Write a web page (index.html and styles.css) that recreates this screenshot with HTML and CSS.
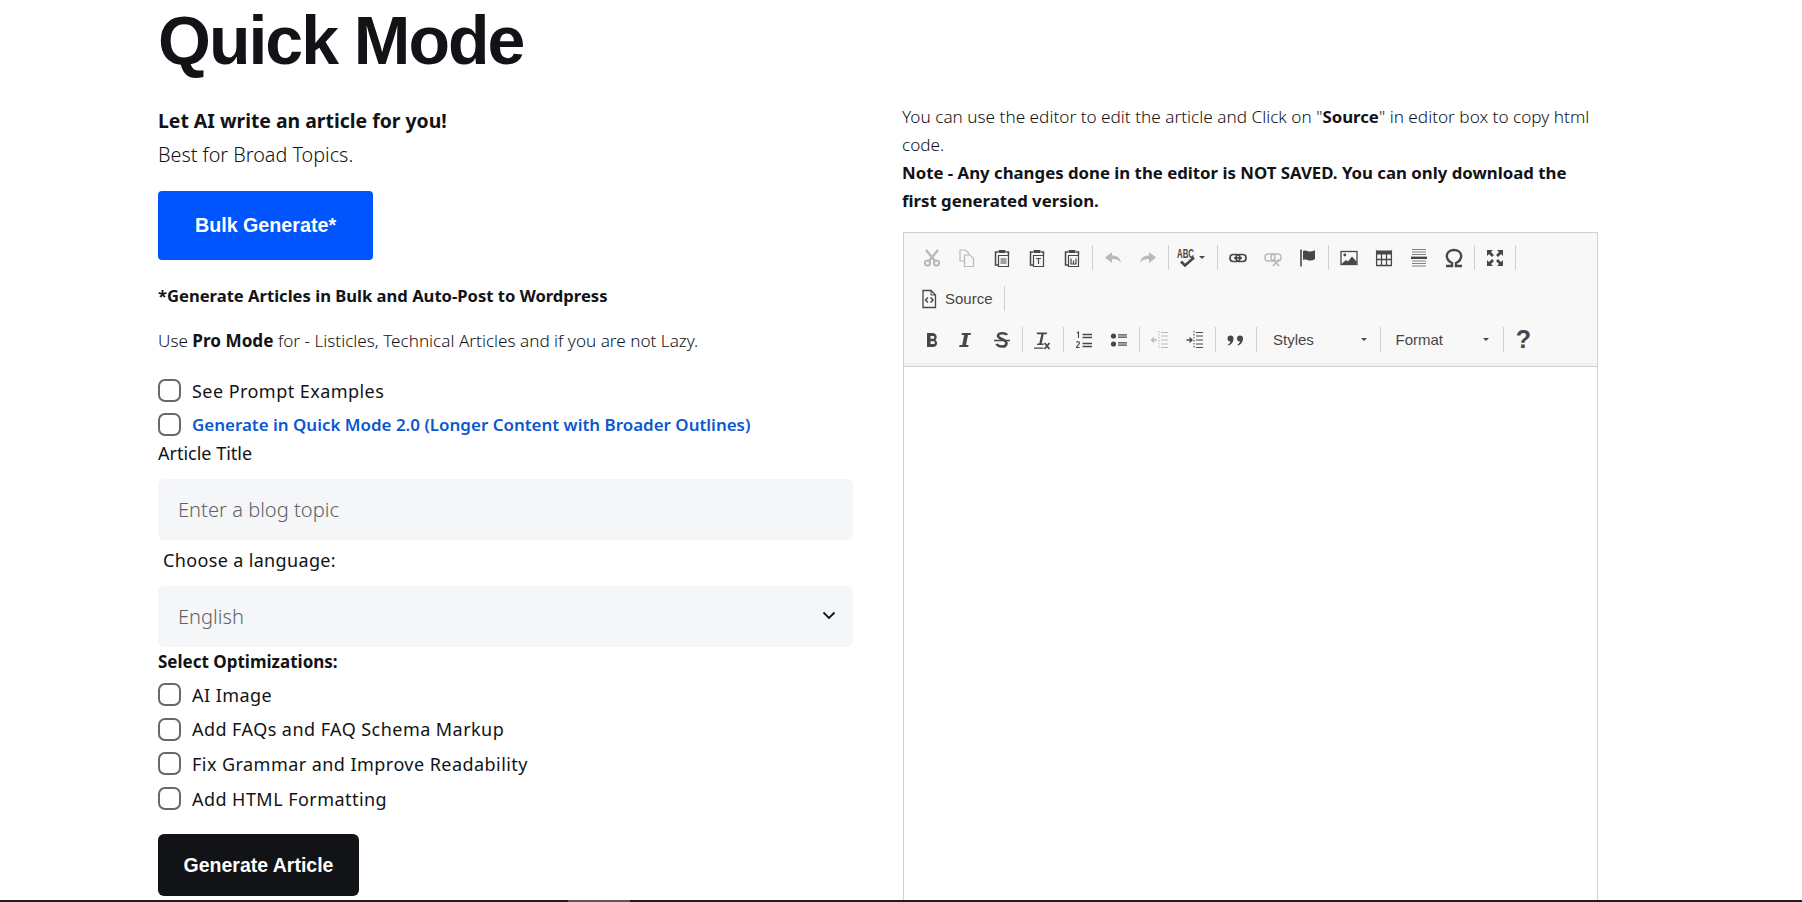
FILE: index.html
```html
<!DOCTYPE html>
<html lang="en">
<head>
<meta charset="utf-8">
<title>Quick Mode</title>
<link rel="stylesheet" href="styles.css">
</head>
<body>
<main class="page">
  <section class="left">
    <h1 class="title">Quick Mode</h1>
    <p class="lead"><b>Let AI write an article for you!</b></p>
    <p class="sub">Best for Broad Topics.</p>
    <button class="btn btn-blue">Bulk Generate*</button>
    <p class="note"><b>*Generate Articles in Bulk and Auto-Post to Wordpress</b></p>
    <p class="use">Use <b>Pro Mode</b> for - Listicles, Technical Articles and if you are not Lazy.</p>
    <label class="check c-first"><input type="checkbox"><span>See Prompt Examples</span></label>
    <label class="check c-second"><input type="checkbox"><span class="link">Generate in Quick Mode 2.0 (Longer Content with Broader Outlines)</span></label>
    <label class="field-label">Article Title</label>
    <input class="field" type="text" placeholder="Enter a blog topic">
    <label class="field-label lang">Choose a language:</label>
    <div class="select-wrap">
      <select class="field select"><option>English</option></select>
      <svg class="chev" viewBox="0 0 14 9"><path d="M1.5 1.5 7 7l5.5-5.5" fill="none" stroke="#121316" stroke-width="1.8"/></svg>
    </div>
    <p class="opt-head"><b>Select Optimizations:</b></p>
    <label class="check opt"><input type="checkbox"><span>AI Image</span></label>
    <label class="check opt"><input type="checkbox"><span>Add FAQs and FAQ Schema Markup</span></label>
    <label class="check opt"><input type="checkbox"><span>Fix Grammar and Improve Readability</span></label>
    <label class="check opt"><input type="checkbox"><span>Add HTML Formatting</span></label>
    <button class="btn btn-black">Generate Article</button>
  </section>

  <section class="right">
    <p class="info">You can use the editor to edit the article and Click on "<b class="src-word">Source</b>" in editor box to copy html<br>code.</p>
    <p class="warn">Note - Any changes done in the editor is NOT SAVED. You can only download the<br>first generated version.</p>
    <div class="editor">
      <div class="toolbar">
        <div class="row">
          <span class="ic off"><svg viewBox="0 0 20 20"><circle cx="5.5" cy="15" r="2.6" fill="none" stroke="currentColor" stroke-width="2"/><circle cx="14.5" cy="15" r="2.6" fill="none" stroke="currentColor" stroke-width="2"/><path d="M4 2l9 11M16 2 7 13" stroke="currentColor" stroke-width="2.4" fill="none"/></svg></span>
          <span class="ic off"><svg viewBox="0 0 20 20"><path d="M3 2h5.500l3 3v2M3 2v11h4M7.500 7H13l3.500 3.500V18.500H7.500z" fill="none" stroke="currentColor" stroke-width="1.200"/></svg></span>
          <span class="ic"><svg viewBox="0 0 20 20"><path d="M6 4H3.500v13H6" fill="none" stroke="currentColor" stroke-width="1.500"/><path d="M6.500 2h7v3h-7z" fill="currentColor"/><path d="M14 4h2.500v3" fill="none" stroke="currentColor" stroke-width="1.500"/><path d="M6.500 7.500h10v11h-10zM8.500 11h6M8.500 13h6M8.500 15h6" fill="none" stroke="currentColor" stroke-width="1.200"/></svg></span>
          <span class="ic"><svg viewBox="0 0 20 20"><path d="M6 4H3.500v13H6" fill="none" stroke="currentColor" stroke-width="1.500"/><path d="M6.500 2h7v3h-7z" fill="currentColor"/><path d="M14 4h2.500v3" fill="none" stroke="currentColor" stroke-width="1.500"/><path d="M6.500 7.500h10v11h-10zM9 10.500h5M11.500 10.500v5.500" fill="none" stroke="currentColor" stroke-width="1.200"/></svg></span>
          <span class="ic"><svg viewBox="0 0 20 20"><path d="M6 4H3.500v13H6" fill="none" stroke="currentColor" stroke-width="1.500"/><path d="M6.500 2h7v3h-7z" fill="currentColor"/><path d="M14 4h2.500v3" fill="none" stroke="currentColor" stroke-width="1.500"/><path d="M6.500 7.500h10v11h-10zM9 10.500V16h5v-5.500M11.500 12.500V16" fill="none" stroke="currentColor" stroke-width="1.200"/></svg></span>
          <i class="sep"></i>
          <span class="ic off"><svg viewBox="0 0 20 20"><path d="M2 9.500 9 4v3.500c5 0 8 2.500 9 7-2-2.500-5-3.500-9-3.500v4z" fill="currentColor"/></svg></span>
          <span class="ic off"><svg viewBox="0 0 20 20"><path d="M18 9.500 11 4v3.500c-5 0-8 2.500-9 7 2-2.500 5-3.500 9-3.500v4z" fill="currentColor"/></svg></span>
          <i class="sep"></i>
          <span class="ic spell"><svg class="abc" viewBox="0 0 24 20"><text x="3" y="10" class="abc-t" textLength="17" lengthAdjust="spacingAndGlyphs">ABC</text><path d="M7 13.500l4 4 9-8" fill="none" stroke="currentColor" stroke-width="2.600"/></svg><i class="caret"></i></span>
          <i class="sep"></i>
          <span class="ic"><svg viewBox="0 0 20 20"><rect x="2" y="6.500" width="10" height="7" rx="3.200" fill="none" stroke="currentColor" stroke-width="1.700"/><rect x="8" y="6.500" width="10" height="7" rx="3.200" fill="none" stroke="currentColor" stroke-width="1.700"/><path d="M6 10h8" stroke="currentColor" stroke-width="1.700"/></svg></span>
          <span class="ic off"><svg viewBox="0 0 20 20"><rect x="2" y="6" width="10" height="7" rx="3" fill="none" stroke="currentColor" stroke-width="1.400"/><rect x="8" y="6" width="10" height="7" rx="3" fill="none" stroke="currentColor" stroke-width="1.400"/><path d="M10 11l6 7M16 11l-6 7" stroke="currentColor" stroke-width="1.800"/></svg></span>
          <span class="ic"><svg viewBox="0 0 20 20"><path d="M3 1.500v17" stroke="currentColor" stroke-width="1.600"/><path d="M5 3c3-1.500 5 1 8 .5 2-.2 3-.8 4-1.500v9c-1 .8-2 1.300-4 1.500-3 .5-5-2-8-.5z" fill="currentColor"/></svg></span>
          <i class="sep"></i>
          <span class="ic"><svg viewBox="0 0 20 20"><rect x="2" y="3.500" width="16" height="13" fill="none" stroke="currentColor" stroke-width="1.300"/><circle cx="5.800" cy="7" r="1.400" fill="currentColor"/><path d="M2.500 16l4.500-4 2 1.500 4-5 4.500 5V16z" fill="currentColor"/></svg></span>
          <span class="ic"><svg viewBox="0 0 20 20"><path d="M2 2.500h16v4H2z" fill="currentColor"/><path d="M2.600 2.500v15h14.800v-15M7.500 6v11.500M12.500 6v11.500M2.600 11.500h14.800" fill="none" stroke="currentColor" stroke-width="1.300"/></svg></span>
          <span class="ic"><svg viewBox="0 0 20 20"><path d="M3 1.500h14M3 4h14M3 6.500h14M3 13h14M3 15.500h14M3 18h14" stroke="currentColor" stroke-width=".9" opacity=".75"/><path d="M2 9.800h16" stroke="currentColor" stroke-width="2.400"/></svg></span>
          <span class="ic"><svg viewBox="0 0 20 20"><path d="M2 18h6v-3C5 13.500 2.800 11 2.800 8 2.800 4.300 6 2 10 2s7.200 2.300 7.200 6c0 3-2.200 5.500-5.200 7v3h6" fill="none" stroke="currentColor" stroke-width="2.400"/></svg></span>
          <i class="sep"></i>
          <span class="ic"><svg viewBox="0 0 20 20"><path d="M2 2h6L6 4l3 3-2 2-3-3-2 2zM18 2v6l-2-2-3 3-2-2 3-3-2-2zM2 18v-6l2 2 3-3 2 2-3 3 2 2zM18 18h-6l2-2-3-3 2-2 3 3 2-2z" fill="currentColor"/></svg></span>
          <i class="sep"></i>
        </div>
        <div class="row">
          <span class="ic ic-src"><svg viewBox="0 0 20 20"><path d="M4 1.500h8l4.500 4.500v12.500H4z" fill="none" stroke="currentColor" stroke-width="1.300"/><path d="M12 1.500V6h4.500" fill="none" stroke="currentColor" stroke-width="1"/><path d="M9 8.500 6.500 11 9 13.500M11.500 8.500 14 11l-2.500 2.500" fill="none" stroke="currentColor" stroke-width="1.500"/></svg><span class="src-t">Source</span></span>
          <i class="sep"></i>
        </div>
        <div class="row">
          <span class="ic"><svg viewBox="0 0 20 20"><path d="M5 3h6a4 4 0 0 1 2.500 6.900A4 4 0 0 1 12 17H5zM8.500 6v2.800H11a1.400 1.400 0 0 0 0-2.800zM8.500 11.300V14H11.500a1.350 1.350 0 0 0 0-2.700z" fill="currentColor" fill-rule="evenodd"/></svg></span>
          <span class="ic"><svg viewBox="0 0 20 20"><path d="M5 3h9l-.4 2H11L9 15h2.600L11.200 17h-9l.4-2h2.600l2-10H4.600z" fill="currentColor"/></svg></span>
          <span class="ic"><svg viewBox="0 0 20 20"><path d="M15 5c-1-2-8-3-9 .5S15 9 14.500 13.500 6 17 4.500 14" fill="none" stroke="currentColor" stroke-width="2.500"/><path d="M2 10.500h16" stroke="currentColor" stroke-width="1.500"/></svg></span>
          <i class="sep"></i>
          <span class="ic"><svg viewBox="0 0 20 20"><path d="M3.500 2.500H14l-.3 1.800h-3l-2 9.200h2L10.500 15H4l.3-1.500h2l2-9.200h-3l-.8.2zM1 17.500h9.500v1.200H1z" fill="currentColor"/><path d="M11.500 13l5 6M16.500 13l-5 6" stroke="currentColor" stroke-width="1.800"/></svg></span>
          <i class="sep"></i>
          <span class="ic"><svg viewBox="0 0 20 20"><path d="M8.500 4.500H18M8.500 7.500H18M8.500 13.500H18M8.500 16.500H18" stroke="currentColor" stroke-width="1.300"/><path d="M3 3l1.500-1v6M2.500 12.500c1-1.300 3-1 3 .5 0 1.300-2.500 2.500-3 4.500h3.300" fill="none" stroke="currentColor" stroke-width="1.100"/></svg></span>
          <span class="ic"><svg viewBox="0 0 20 20"><circle cx="4.500" cy="6" r="2.600" fill="currentColor"/><circle cx="4.500" cy="14" r="2.600" fill="currentColor"/><path d="M9 4.800h9M9 7.200h9M9 12.800h9M9 15.200h9" stroke="currentColor" stroke-width="1.300"/></svg></span>
          <i class="sep"></i>
          <span class="ic off"><svg viewBox="0 0 20 20"><path d="M11 2.500h7M11 6h7M11 10h7M11 14h7M11 17.500h7" stroke="currentColor" stroke-width="1.100" fill="none"/><path d="M9 1v18" stroke="currentColor" stroke-width="1.100" stroke-dasharray="1.500 1.500" fill="none"/><path d="M7 10H1.500M4 7.500 1.500 10 4 12.500" stroke="currentColor" stroke-width="1.300" fill="none"/></svg></span>
          <span class="ic"><svg viewBox="0 0 20 20"><path d="M11 2.500h7M11 6h7M11 10h7M11 14h7M11 17.500h7" stroke="currentColor" stroke-width="1.100" fill="none"/><path d="M9 1v18" stroke="currentColor" stroke-width="1.100" stroke-dasharray="1.500 1.500" fill="none"/><path d="M1.500 10H7M4.500 7.500 7 10l-2.500 2.500" stroke="currentColor" stroke-width="1.300" fill="none"/></svg></span>
          <i class="sep"></i>
          <span class="ic"><svg viewBox="0 0 20 20"><path d="M1.500 8.500a3 3 0 0 1 6 0c0 3.500-2 6-5 7l-.5-1c1.400-.8 2.200-1.600 2.500-3a3 3 0 0 1-3-3zM11 8.500a3 3 0 0 1 6 0c0 3.500-2 6-5 7l-.5-1c1.400-.8 2.200-1.600 2.500-3a3 3 0 0 1-3-3z" fill="currentColor"/></svg></span>
          <i class="sep"></i>
          <span class="combo combo-styles"><span>Styles</span><i class="caret"></i></span>
          <i class="sep"></i>
          <span class="combo combo-format"><span>Format</span><i class="caret"></i></span>
          <i class="sep"></i>
          <span class="ic help">?</span>
        </div>
      </div>
      <div class="content"></div>
    </div>
  </section>
</main>
<div class="bar"><span class="thumb"></span></div>
</body>
</html>
```
FILE: styles.css
```css
* { box-sizing: border-box; }
html, body { margin: 0; height: 902px; overflow: hidden; background: #fff; }
body { font-family: "Noto Sans", sans-serif; color: #121316; font-size: 17px; }
p { margin: 0; }
b { font-weight: 700; }

.page { height: 900px; overflow: hidden; display: grid; grid-template-columns: 695px 695px; column-gap: 49px; padding-left: 158px; align-items: start; }
.left { display: flex; flex-direction: column; align-items: flex-start; }
.title { margin: 0; font: 700 68px/80px "Liberation Sans", Arial, sans-serif; letter-spacing: -2px; height: 105px; }
.lead { font-size: 19.4px; line-height: 30px; margin-top: 1px; }
.sub { font-size: 19.8px; line-height: 30px; margin-top: 4px; font-weight: 300; }

.btn { border: 0; border-radius: 4px; color: #fff; font: 700 19.7px/1 "Liberation Sans", Arial, sans-serif; display: block; padding: 1px 0 0; }
.btn-blue { width: 215px; height: 69px; background: #0055ff; margin-top: 21px; }
.note { font-size: 16.6px; line-height: 26px; margin-top: 23px; }
.use { font-size: 17.15px; line-height: 26px; margin-top: 19px; font-weight: 300; }
.use b { font-weight: 700; }

.check { display: flex; align-items: center; gap: 10px; font-size: 18px; letter-spacing: .45px; }
.check input { appearance: none; width: 23px; height: 23px; margin: 0; border: 2px solid #66686c; border-radius: 7px; background: #fff; flex: none; }
.check span { padding-left: 1px; }
.c-first { margin-top: 25px; height: 23px; }
.c-second { margin-top: 11px; height: 23px; }
.link { color: #0b57d0; font-weight: 600; font-size: 16.95px; letter-spacing: 0; }

.field-label { font-size: 18px; line-height: 24px; margin-top: 5px; }
.field { width: 695px; height: 61px; border: 0; border-radius: 6px; background: #f5f6f8; padding: 0 20px; font: 300 20.1px "Noto Sans", sans-serif; color: #5f6368; display: block; margin: 14px 0 0; }
.field::placeholder { color: #5f6368; }
.lang { margin-top: 8px; padding-left: 5px; letter-spacing: .35px; }
.select-wrap { position: relative; margin-top: 2px; }
.select { appearance: none; margin-top: 12px; }
.chev { position: absolute; right: 17px; top: 37px; width: 14px; height: 9px; }
.opt-head { font-size: 17px; line-height: 24px; margin-top: 3px; }
.opt { height: 23px; margin-top: 11.7px; }
.opt-head + .opt { margin-top: 9px; }
.btn-black { width: 201px; height: 62px; background: #121316; margin-top: 24px; font-size: 19.5px; border-radius: 6px; }

.right { padding-top: 103px; }
.info { font-size: 17.2px; line-height: 28px; font-weight: 300; }
.src-word { font-size: 16.8px; }
.warn { font-size: 16.8px; line-height: 28px; font-weight: 700; }

.editor { margin-top: 17px; margin-left: 1px; width: 695px; height: 700px; border: 1px solid #d1d1d1; }
.toolbar { height: 134px; background: #f8f8f8; border-bottom: 1px solid #d1d1d1; box-shadow: inset 0 -3px 0 #f1f1f1; padding: 4px 0 0 10px; display: flex; flex-direction: column; }
.row { display: flex; align-items: center; height: 41px; color: #474747; }
.ic { width: 35px; height: 30px; display: flex; align-items: center; justify-content: center; flex: none; }
.ic svg { width: 20px; height: 20px; display: block; }
.off { color: #b9b9b9; }
.sep { width: 1px; height: 25px; background: #cfcfcf; margin: 0 2.5px; flex: none; display: block; }
.spell { width: 43px; gap: 1px; justify-content: flex-start; padding-left: 3px; }
.ic .abc { width: 24px; height: 20px; overflow: visible; }
.abc-t { font: 700 12.5px "Liberation Sans", sans-serif; fill: currentColor; }
.caret { display: block; width: 0; height: 0; border: 3px solid transparent; border-top: 3px solid #474747; border-bottom: 0; flex: none; }
.help { font: 700 25px "Liberation Sans", sans-serif; }
.ic-src { width: auto; gap: 6px; padding-left: 5px; padding-right: 9px; }
.src-t { font: 15px "Liberation Sans", Arial, sans-serif; color: #474747; }
.combo { display: flex; align-items: center; justify-content: space-between; height: 30px; font: 15px "Liberation Sans", Arial, sans-serif; color: #474747; flex: none; }
.combo-styles { width: 118.5px; padding: 0 10.5px 0 14px; }
.combo-format { width: 116.5px; padding: 0 11.5px 0 12px; }
.content { background: #fff; }

.bar { height: 2px; background: #1c1c1f; position: relative; }
.thumb { position: absolute; left: 568px; top: 0; width: 62px; height: 2px; background: #57575a; }
```
